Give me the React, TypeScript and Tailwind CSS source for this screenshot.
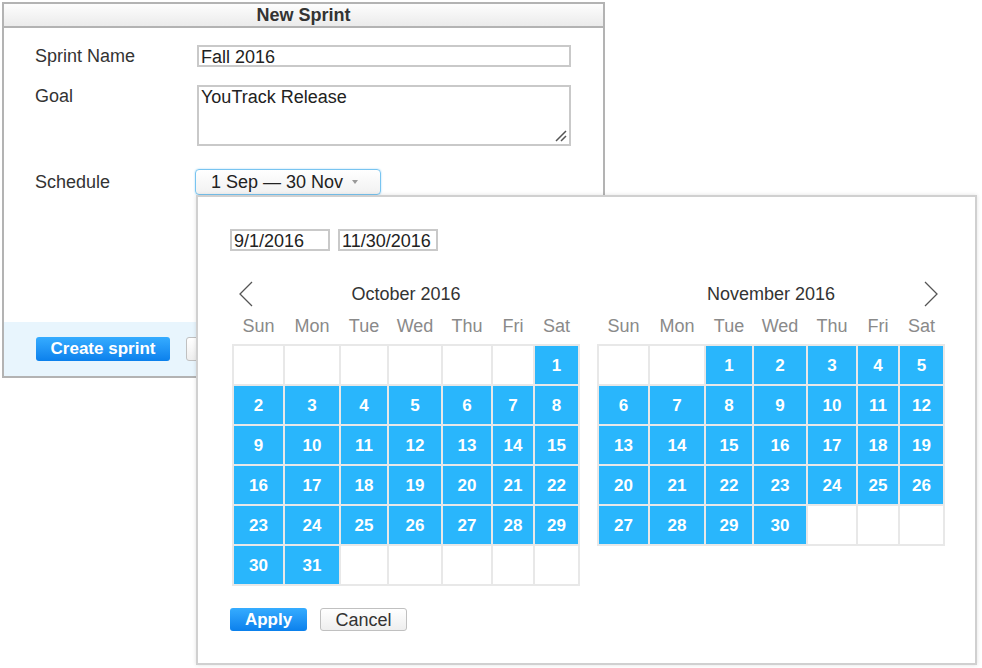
import React from 'react'

const BLUE = 'bg-[#29b6fc]'

const october: (number | null)[] = [
  null, null, null, null, null, null, 1,
  2, 3, 4, 5, 6, 7, 8,
  9, 10, 11, 12, 13, 14, 15,
  16, 17, 18, 19, 20, 21, 22,
  23, 24, 25, 26, 27, 28, 29,
  30, 31, null, null, null, null, null,
]

const november: (number | null)[] = [
  null, null, 1, 2, 3, 4, 5,
  6, 7, 8, 9, 10, 11, 12,
  13, 14, 15, 16, 17, 18, 19,
  20, 21, 22, 23, 24, 25, 26,
  27, 28, 29, 30, null, null, null,
]

const DAYS = ['Sun', 'Mon', 'Tue', 'Wed', 'Thu', 'Fri', 'Sat']

function Chevron({ dir }: { dir: 'left' | 'right' }) {
  return (
    <svg width="16" height="26" viewBox="0 0 16 26" fill="none">
      {dir === 'left' ? (
        <path d="M14 1 L2 13 L14 25" stroke="#555" strokeWidth="1.3" />
      ) : (
        <path d="M2 1 L14 13 L2 25" stroke="#555" strokeWidth="1.3" />
      )}
    </svg>
  )
}

function Month({
  title,
  days,
  left,
  right,
}: {
  title: string
  days: (number | null)[]
  left?: boolean
  right?: boolean
}) {
  return (
    <div className="w-[348px]">
      {/* Month title with arrows */}
      <div className="flex h-[26px] items-center px-[6px]">
        <div className="w-[16px]">{left && <Chevron dir="left" />}</div>
        <div className="flex-1 text-center text-[18px] leading-[26px] text-[#333]">{title}</div>
        <div className="w-[16px]">{right && <Chevron dir="right" />}</div>
      </div>

      {/* Weekday names */}
      <div className="mt-[8px] grid grid-cols-[49px_54px_46px_52px_48px_40px_43px] gap-x-[2px] px-[2px]">
        {DAYS.map((d) => (
          <div key={d} className="text-center text-[18px] leading-[22px] text-[#8a8a8a]">
            {d}
          </div>
        ))}
      </div>

      {/* Day cells */}
      <div className="mt-[7px] grid grid-cols-[49px_54px_46px_52px_48px_40px_43px] gap-[2px] bg-[#e8e8e8] p-[2px]">
        {days.map((n, i) => (
          <div
            key={i}
            className={`flex h-[38px] items-center justify-center pt-[1px] text-[17px] font-bold text-white ${
              n ? BLUE : 'bg-white'
            }`}
          >
            {n}
          </div>
        ))}
      </div>
    </div>
  )
}

export default function App() {
  return (
    <div className="relative h-[668px] w-[982px] overflow-hidden bg-white font-['Liberation_Sans',Arial,sans-serif] text-[18px] text-[#333]">
      {/* New Sprint dialog */}
      <div className="pl-[2px] pt-[2px]">
        <div className="flex h-[376px] w-[603px] flex-col border-2 border-[#b3b3b3]">
          <div className="h-[24px] border-b-2 border-[#b3b3b3] bg-gradient-to-b from-[#fdfdfd] to-[#ebebeb] text-center font-bold leading-[22px] text-[#333]">
            New Sprint
          </div>

          <div className="h-[294px] pl-[31px] pt-[17px]">
            <div className="flex h-[22px] items-center">
              <span className="w-[162px] leading-[22px]">Sprint Name</span>
              <div className="h-[22px] w-[374px] border-2 border-[#c9c9c9] px-[2px] pt-[1px] leading-[18px] text-[#222]">
                Fall 2016
              </div>
            </div>

            <div className="mt-[18px] flex items-start">
              <span className="w-[162px] leading-[22px]">Goal</span>
              <div className="relative h-[61px] w-[374px] border-2 border-[#c9c9c9] px-[2px] leading-[20px] text-[#222]">
                YouTrack Release
                <svg
                  className="absolute bottom-[2px] right-[2px]"
                  width="13"
                  height="13"
                  viewBox="0 0 13 13"
                >
                  <path d="M12 2 L2 12 M12 7 L7 12" stroke="#555" strokeWidth="1.5" />
                </svg>
              </div>
            </div>

            <div className="mt-[23px] flex items-center">
              <span className="w-[160px] leading-[22px]">Schedule</span>
              <div className="flex h-[26px] w-[186px] items-center rounded-[4px] border border-[#78c4f0] bg-gradient-to-b from-white to-[#f1f1f1] pl-[15px] shadow-[0_0_2px_#9fd6f7]">
                <span className="leading-[22px] text-[#222]">1 Sep — 30 Nov</span>
                <svg className="ml-[9px]" width="6" height="4" viewBox="0 0 6 4">
                  <path d="M0 0 L6 0 L3 4 Z" fill="#999" />
                </svg>
              </div>
            </div>
          </div>

          <div className="flex flex-1 items-center gap-[16px] bg-[#e8f5fd] pl-[32px]">
            <button className="h-[24px] w-[134px] rounded-[3px] bg-gradient-to-b from-[#35acff] to-[#0a80ec] text-[17px] font-bold leading-[22px] text-white">
              Create sprint
            </button>
            <button className="h-[24px] w-[86px] rounded-[3px] border border-[#c0c0c0] bg-gradient-to-b from-white to-[#eeeeee] text-[18px] text-[#333]">
              Cancel
            </button>
          </div>
        </div>
      </div>

      {/* Date range popup */}
      <div className="absolute left-[196px] top-[195px] h-[470px] w-[781px] border-2 border-[#d0d0d0] bg-white pl-[32px] pt-[32px] shadow-[0_0_4px_rgba(0,0,0,0.12)]">
        <div className="flex gap-[8px]">
          <div className="h-[22px] w-[100px] overflow-hidden whitespace-nowrap border-2 border-[#c9c9c9] px-[2px] pt-[1px] leading-[18px] text-[#222]">
            9/1/2016
          </div>
          <div className="h-[22px] w-[100px] overflow-hidden whitespace-nowrap border-2 border-[#c9c9c9] px-[2px] pt-[1px] leading-[18px] text-[#222]">
            11/30/2016
          </div>
        </div>

        <div className="ml-[2px] mt-[30px] flex gap-[17px]">
          <Month title="October 2016" days={october} left />
          <Month title="November 2016" days={november} right />
        </div>

        <div className="mt-[22px] flex gap-[13px]">
          <button className="h-[23px] w-[77px] rounded-[3px] bg-gradient-to-b from-[#35acff] to-[#0a80ec] text-[17px] font-bold leading-[22px] text-white">
            Apply
          </button>
          <button className="h-[23px] w-[87px] rounded-[3px] border border-[#c0c0c0] bg-gradient-to-b from-white to-[#eeeeee] text-[18px] leading-[20px] text-[#333]">
            Cancel
          </button>
        </div>
      </div>
    </div>
  )
}
